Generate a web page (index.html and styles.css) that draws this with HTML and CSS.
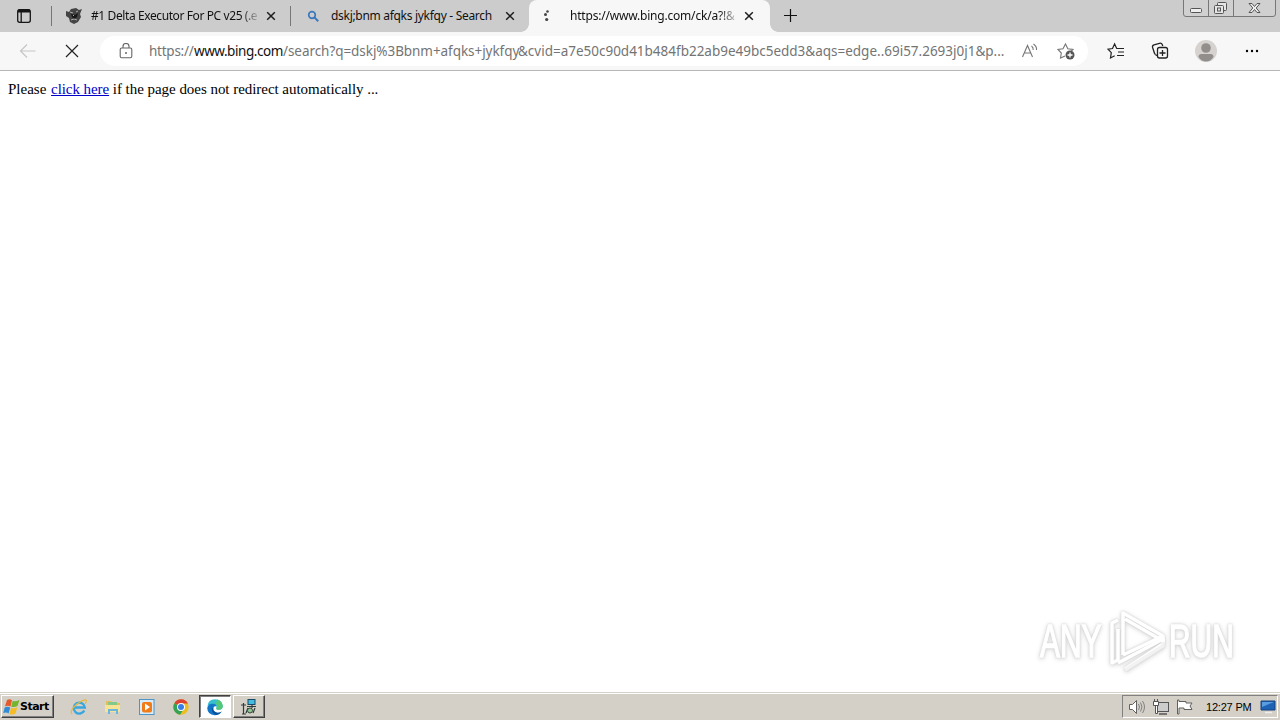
FILE: index.html
```html
<!DOCTYPE html>
<html lang="en">
<head>
<meta charset="utf-8">
<title>Browser</title>
<link rel="stylesheet" href="styles.css">
</head>
<body>
<div class="screen">
  <header class="tabbar">
    <svg class="tab-menu" width="16" height="16" viewBox="0 0 16 16" fill="none" stroke="#151515" stroke-width="1.3"><rect x="1.7" y="1.7" width="12.6" height="12.6" rx="2"/><path d="M2 3h12" stroke-width="3"/><path d="M5.2 4v10"/></svg>
    <div class="tab tab-first">
      <svg class="favicon" width="16" height="16" viewBox="0 0 16 16"><path d="M0 3l3 1 2-3 5-1 3 2 3-1-2 5 1 3-3 5-4 2-4-2-1-4-3-2z" fill="#444"/><path d="M5 6l4 1 3-2-1 4-3 2-2-2z" fill="#161616"/><path d="M4 4l3 1M10 4l2-1M5 12l3-1 3 1M7 7l1 1" stroke="#aaa" fill="none"/></svg>
      <span class="title fade t1">#1 Delta Executor For PC v25 (.e</span>
      <svg class="close" width="10" height="10" viewBox="0 0 10 10"><path d="M1.2 1.2l7.6 7.6M8.8 1.2L1.2 8.8"/></svg>
    </div>
    <div class="tab tab-second">
      <svg class="favicon" width="16" height="16" viewBox="0 0 16 16" fill="none" stroke="#3b78bd"><circle cx="7" cy="7" r="3.3" stroke-width="1.7"/><path d="M9.400 9.400l3.800 3.800" stroke-width="2"/></svg>
      <span class="title t2">dskj;bnm afqks jykfqy - Search</span>
      <svg class="close" width="10" height="10" viewBox="0 0 10 10"><path d="M1.2 1.2l7.6 7.6M8.8 1.2L1.2 8.8"/></svg>
    </div>
    <div class="tab tab-active">
      <svg class="favicon" width="16" height="16" viewBox="0 0 16 16" fill="#444"><circle cx="9.500" cy="3.500" r="1.300"/><circle cx="7.500" cy="6.400" r="1.500"/><circle cx="8.700" cy="11.500" r="1.600"/></svg>
      <span class="title fade t3">https://www.bing.com/ck/a?!&amp;</span>
      <svg class="close" width="10" height="10" viewBox="0 0 10 10"><path d="M1.2 1.2l7.6 7.6M8.8 1.2L1.2 8.8"/></svg>
    </div>
    <svg class="plus" width="14" height="14" viewBox="0 0 14 14"><path d="M6.500 0v13M0 6.500h13" stroke="#111" stroke-width="1.200"/></svg>
    <div class="winbtns">
      <svg width="93" height="17" viewBox="0 0 93 17" fill="none" stroke="#777"><path d="M.5 0v14q0 2.500 2.500 2.500h87q2.500 0 2.500-2.500V0" fill="#d0d0d0"/><path d="M25.500 0v16M50.500 0v16"/><rect x="7.500" y="8.500" width="11" height="4" rx="1" fill="#eee" stroke="#555"/><g fill="#e6e6e6" stroke="#555"><rect x="34.500" y="2.500" width="9" height="8" rx="1"/><rect x="31.500" y="5.500" width="9" height="8" rx="1"/><rect x="34.500" y="8" width="3" height="3"/></g><path d="M66 3.500h3l2.500 3 2.500-3h3l-3.800 4.500 3.800 4.500h-3l-2.500-3-2.500 3h-3l3.800-4.500z" fill="#eee" stroke="#555"/></svg>
    </div>
  </header>

  <nav class="toolbar">
    <svg class="back" width="18" height="16" viewBox="0 0 18 16" fill="none" stroke="#c6c6c6" stroke-width="1.200"><path d="M16.500 8H1.500M8 1.500L1.500 8 8 14.500"/></svg>
    <svg class="stop" width="14" height="14" viewBox="0 0 14 14" fill="none" stroke="#222" stroke-width="1.200"><path d="M1 1l12 12M13 1L1 13"/></svg>
    <div class="address">
      <svg class="lock" width="14" height="16" viewBox="0 0 14 16" fill="none" stroke="#666" stroke-width="1.100"><rect x="1.200" y="5" width="11.600" height="9.800" rx="1.500"/><path d="M4 5V3.500a3 3 0 0 1 6 0V5"/><circle cx="7" cy="10" r="1" fill="#666" stroke="none"/></svg>
      <div class="url"><span class="u1">https://</span><span class="u2 host">www.bing.com</span><span class="u3">/search?q=dskj%3Bbnm+afqks+jykfqy</span><span class="u4">&amp;cvid=a7e50c90d41b484fb22ab9e49bc5edd3&amp;aqs=edge..69i57.2693j0j1&amp;p...</span></div>
      <svg class="read" width="18" height="16" viewBox="0 0 18 16" fill="none" stroke="#777" stroke-width="1.100"><path d="M1.500 14L6.500 2.500 11.500 14M3.300 10h6.400M10.500 3q2 1.500 1.700 4M12.500 1q3.500 2.500 3 6"/></svg>
      <svg class="fav" width="18" height="18" viewBox="0 0 18 18" fill="none" stroke="#777" stroke-width="1.100"><path d="M8 14l-4.500 2 .8-5L1 7.500l5-.8L8.500 2l2.300 4.700 5.200.8-2 2"/><circle cx="13" cy="13" r="4.500" fill="#555" stroke="none"/><path d="M13 10.500v5M10.500 13h5" stroke="#fff" stroke-width="1.300"/></svg>
    </div>
    <svg class="favorites" width="18" height="18" viewBox="0 0 18 18" fill="none" stroke="#222" stroke-width="1.200"><path d="M11 6.500H9.700L7.600 2 5.500 6.500 1 7.200l3.300 3.500-.8 5.300 4.200-2.200M10 6.500h7M11 10h6M10 13.500h7"/></svg>
    <svg class="collections" width="18" height="18" viewBox="0 0 18 18" fill="none" stroke="#222" stroke-width="1.300"><path d="M4.500 12.500Q3.700 12 3.400 11L1.600 5.500Q1 3.500 3 2.800L8.500 1.300q2-.5 2.700 1.200l.6 1.500"/><rect x="6.500" y="5.500" width="10" height="10.500" rx="2"/><path d="M11.500 8v6M8.500 11h6M4.500 12.500q.5 1 2 1"/></svg>
    <svg class="avatar" width="22" height="22" viewBox="0 0 22 22"><circle cx="11" cy="11" r="11" fill="#d5d2d0"/><circle cx="11" cy="8" r="4.800" fill="#918e8c"/><path d="M3.500 17q0-3 3-3h9q3 0 3 3-3 4.500-7.500 4.500T3.500 17" fill="#918e8c"/></svg>
    <svg class="more" width="14" height="4" viewBox="0 0 14 4"><circle cx="2" cy="2" r="1.200"/><circle cx="7" cy="2" r="1.200"/><circle cx="12" cy="2" r="1.200"/></svg>
  </nav>

  <main class="page">
    <p class="message"><span>Please </span><a class="m2" href="#">click here</a><span class="m3"> if the page does not redirect automatically ...</span></p>
    <div class="watermark">
      <span class="wm">ANY</span>
      <svg width="62" height="64" viewBox="0 0 62 64" fill="none" stroke="#fff" stroke-width="3.500" stroke-linejoin="round"><path d="M16 46V4l40 23v5L18 10M16 46l40-19" /><path d="M11 11L5 14v40l6-3V20"/><path d="M11 54l45-24v5L18 60"/><path d="M18 61l38-24v-4" stroke="#f2f2f2"/></svg>
      <span class="wm">RUN</span>
    </div>
  </main>

  <footer class="taskbar">
    <div class="start">
      <svg width="17" height="18" viewBox="0 0 17 18"><path d="M4 2q2.500-1.500 5 .2L7.500 8.400Q5 7 2 8.200z" fill="#e45b2b"/><path d="M9.700 2.800q3 1.400 6.800-1L14.500 8q-3.300 1.800-6.300.7z" fill="#73b52d"/><path d="M1.800 9.200q3-1.200 5.400.2L5.600 15.500q-2.300-1.700-5.400-.4z" fill="#328bd4"/><path d="M8 9.700q3 1.400 6.400-.5L12.500 15.500q-3 1.700-6.100.4z" fill="#f5bc26"/></svg>
      <span>Start</span>
    </div>
    <svg class="task ie" width="18" height="18" viewBox="0 0 18 18" fill="none"><path d="M14.300 12.500a5.500 5.500 0 1 1 .5-3H5" stroke="#38a6df" stroke-width="2.400"/><path d="M2 16Q-1 13 7 6q7-5 9-4 1 1-1 4" stroke="#e4b93e" stroke-width="1.200"/></svg>
    <svg class="task folder" width="18" height="18" viewBox="0 0 18 18"><path d="M2 3h5l1 2h8v9H2z" fill="#e6bf54"/><path d="M4 4h9v3H4z" fill="#83c98c"/><path d="M1 7h15v7H1z" fill="#f6e394"/><path d="M4 16v-5h10v5h-2v-3H6v3z" fill="#6cb5dc"/></svg>
    <svg class="task media" width="18" height="18" viewBox="0 0 18 18"><rect x="1.500" y="1.500" width="14.500" height="15" fill="#d7ecfa" stroke="#4d94c8"/><rect x="4" y="4" width="10" height="10.500" rx="2" fill="#f07b19"/><path d="M7 5.500v7l5-3.500z" fill="#fff"/></svg>
    <svg class="task chrome" width="18" height="18" viewBox="0 0 18 18"><circle cx="9" cy="9" r="7.700" fill="#edbd24"/><path d="M9 9L2.300 5.200A7.700 7.700 0 0 1 16 5.500H9z" fill="#de4033"/><path d="M9 9L2.300 5.200A7.700 7.700 0 0 0 8 16.700l4-6z" fill="#36a254"/><circle cx="9" cy="9" r="4" fill="#fff"/><circle cx="9" cy="9" r="3" fill="#397ee8"/></svg>
    <div class="running edge"><svg width="18" height="18" viewBox="0 0 18 18"><path d="M1.500 8Q2 1.500 9 1.200q7 .3 7.800 6.800 0 3.500-4 3.800-3.300 0-2.300-2 .5-3-3-3.300Q3.500 6 1.500 8" fill="#35bfd0"/><path d="M11 1.600q5 1.200 5.800 6.400 0 3.500-4 3.800-3.300 0-2.300-2 1.500-2-.5-4z" fill="#55c878"/><path d="M1.200 10Q2 5.500 7 5.700q3.500.3 3.500 2.800-2-1-3 .8-1.500 4 3.500 5.400 2 .6 4.800-1.200-3 4-7.300 3.800Q1.500 16.500 1.200 10" fill="#1276c8"/><path d="M7.500 9.300q-1.500 4 3.500 5.400 2 .6 4.800-1.200-3 4-6 3.500Q5 14.500 6 10.500z" fill="#0b529d"/></svg></div>
    <div class="running app"><svg width="18" height="18" viewBox="0 0 18 18"><rect x="8" y="1.500" width="7" height="5" fill="#42bce0" stroke="#174a66"/><path d="M1 7h5M3.500 5v11M2 16h4M7 8.500h9M12 7v3M8 10l-2 5M15 10l-2 5" stroke="#303c3c" stroke-width="1.200"/><circle cx="10" cy="12.500" r="2.500" fill="#8fc597" stroke="#36483a"/></svg></div>
    <div class="tray">
      <svg width="18" height="16" viewBox="0 0 18 16" fill="none" stroke="#606060"><path d="M1.500 5.500h3l4-4v13l-4-4h-3z" fill="#fff"/><path d="M10.500 5q2 3 0 6M12.500 3.500q3 4.500 0 9M14.500 2q4 6 0 12" stroke="#808080"/></svg>
      <svg class="net" width="16" height="16" viewBox="0 0 16 16" fill="none" stroke="#555"><rect x="4.500" y="3.500" width="11" height="9" fill="#ccc"/><path d="M6 15h8" stroke-width="1.500"/><path d="M.5 2.500h5v4h-5zM1.500 0v2M4.500 0v2M2.500 7v7.500h2V7" fill="#fff"/></svg>
      <svg class="flag" width="16" height="16" viewBox="0 0 16 16" fill="#fff" stroke="#606060"><path d="M.5 1v14h1.500V9h5v1.500h8l-2-3.500 2-3H9V2.500H2V1z"/></svg>
      <span class="clock">12:27 PM</span>
      <svg class="desktop" width="16" height="14" viewBox="0 0 16 14"><path d="M1 1h14v9H1z" fill="#1d62b5" stroke="#17427c"/><path d="M2 2h12L2 7z" fill="#5a9ce0"/><path d="M5 12.500h7" stroke="#eee" stroke-width="1.500"/></svg>
    </div>
  </footer>
</div>
</body>
</html>
```
FILE: styles.css
```css
* { box-sizing: border-box; }
body { margin: 0; background: #fff; font-family: "Noto Sans", sans-serif; }
svg { display: block; flex: none; }
.screen { width: 1280px; height: 720px; display: flex; flex-direction: column; overflow: hidden; }
.tabbar { height: 32px; flex: none; display: flex; align-items: center; background: #ccc; }
.tab-menu { margin-left: 16px; }
.tab { display: flex; align-items: center; height: 32px; font-size: 12px; color: #111; }
.title { white-space: nowrap; flex: none; line-height: 18px; }
.fade { -webkit-mask-image: linear-gradient(to right, #000 90%, transparent 102%); mask-image: linear-gradient(to right, #000 90%, transparent 102%); }
.close { fill: none; stroke: #1c1c1c; stroke-width: 1.5; }
.tab-first { width: 240px; margin-left: 19px; padding-left: 15px; background: linear-gradient(#777, #777) 0 6px / 1px 20px no-repeat, linear-gradient(#777, #777) 239px 6px / 1px 20px no-repeat; }
.tab-first .title { width: 167px; margin-left: 9px; margin-right: 8px; }
.tab-second { width: 238px; padding-left: 14px; }
.tab-second .title { width: 166px; margin-left: 10px; margin-right: 8px; }
.tab-active { position: relative; width: 241px; padding-left: 9px; background: #f7f7f7; border-radius: 8px 8px 0 0; }
.tab-active::before, .tab-active::after { content: ""; position: absolute; bottom: 0; width: 8px; height: 8px; }
.tab-active::before { left: -8px; background: radial-gradient(circle at 0 0, transparent 7.5px, #f7f7f7 8px); }
.tab-active::after { right: -8px; background: radial-gradient(circle at 100% 0, transparent 7.5px, #f7f7f7 8px); }
.tab-active .title { width: 166px; margin-left: 16px; margin-right: 8px; }
.t1 { letter-spacing: -.4px; }
.t2 { letter-spacing: -.3px; }
.t3 { letter-spacing: -.2px; }
.plus { margin-left: 14px; }
.winbtns { margin-left: auto; margin-right: 4px; align-self: flex-start; }
.toolbar { height: 39px; flex: none; display: flex; align-items: center; background: #f7f7f7; border-bottom: 1px solid #b6b6b6; }
.back { margin-left: 19px; }
.stop { margin-left: 28px; }
.address { display: flex; align-items: center; width: 988px; height: 30px; margin-left: 21px; padding-left: 19px; border-radius: 15px; background: #fff; }
.url { width: 859px; margin-left: 16px; flex: none; display: flex; white-space: nowrap; font-size: 13.5px; line-height: 20px; color: #747474; }
.host { color: #111; }
.u1 { width: 45px; letter-spacing: -.25px; }
.u2 { width: 89px; letter-spacing: -.45px; }
.u3 { width: 235px; letter-spacing: -.06px; }
.u4 { letter-spacing: -.01px; }
.read { margin-left: 13px; }
.fav { margin-left: 18px; }
.favorites { margin-left: 19px; }
.collections { margin-left: 26px; }
.avatar { margin-left: 26px; }
.more { margin-left: 28px; }
.page { flex: 1; padding: 9px 8px 0; display: flex; flex-direction: column; }
.message { margin: 0; font: 15px/18px "Liberation Serif", serif; white-space: nowrap; color: #000; }
.message a { color: #0000c8; letter-spacing: -.07px; margin-left: 1px; }
.m3 { letter-spacing: -.04px; }
.watermark { display: flex; align-items: center; margin: auto 36px 19px auto; height: 64px; filter: drop-shadow(0 0 1px #d2d2d2) drop-shadow(0 1px 2px #d8d8d8); }
.wm { font: 46px/50px "Liberation Sans", sans-serif; width: 67px; transform-origin: 0 50%; transform: scaleX(.65); color: #fff; -webkit-text-stroke: 1.5px #fff; white-space: nowrap; }
.taskbar { height: 28px; flex: none; display: flex; align-items: center; background: #d4d0c8; border-top: 1px solid #d4d0c8; box-shadow: inset 0 1px #fff; }
.start { display: flex; align-items: center; width: 53px; height: 23px; margin-left: 1px; padding-left: 1px; border: 1px solid; border-color: #fff #404040 #404040 #fff; box-shadow: inset -1px -1px #808080; font: bold 11px/18px "DejaVu Sans", sans-serif; letter-spacing: -.5px; color: #000; }
.ie { margin-left: 16px; }
.folder, .media, .chrome { margin-left: 16px; }
.running { height: 23px; width: 32px; display: flex; align-items: center; justify-content: center; border: 1px solid; }
.edge { margin-left: 9px; background: #fff; border-color: #404040 #fff #fff #404040; box-shadow: inset 1px 1px #808080; }
.app { margin-left: 2px; border-color: #fff #404040 #404040 #fff; box-shadow: inset -1px -1px #808080; }
.tray { display: flex; align-items: center; width: 156px; height: 23px; margin-left: auto; margin-right: 2px; padding-left: 5px; border: 1px solid; border-color: #808080 #fff #fff #808080; }
.net { margin-left: 7px; }
.flag { margin-left: 8px; }
.clock { width: 46px; margin-left: 13px; white-space: nowrap; font: 11px/18px "Liberation Sans", sans-serif; letter-spacing: -.2px; color: #000; }
.desktop { margin-left: 8px; }
```
